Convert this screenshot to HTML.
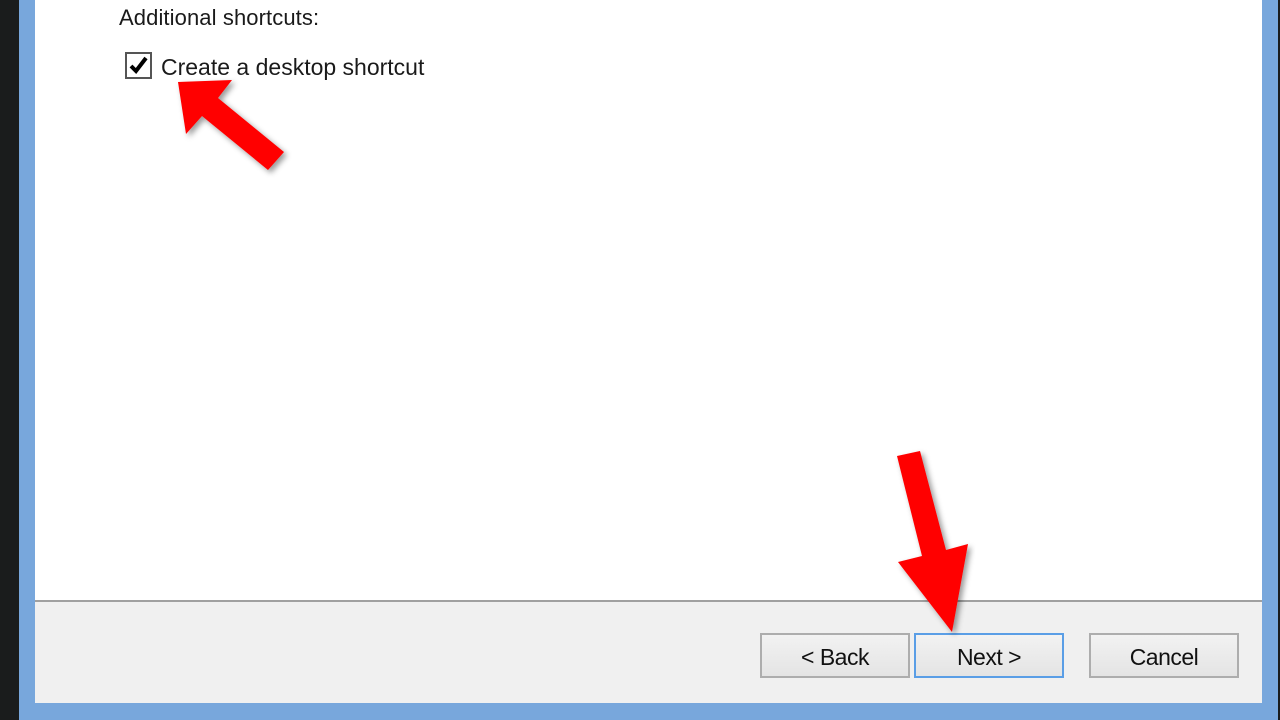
<!DOCTYPE html>
<html><head><style>
body{margin:0;width:1280px;height:720px;overflow:hidden;background:#1a1c1c;position:relative;font-family:"Liberation Sans",sans-serif;}
.frame{position:absolute;left:19px;top:-10px;width:1259px;height:730px;background:#78a7dc;}
.white{position:absolute;left:35px;top:0;width:1227px;height:600px;background:#fff;}
.gray{position:absolute;left:35px;top:600px;width:1227px;height:103px;background:#f0f0f0;border-top:2px solid #a0a0a0;box-sizing:border-box;}
.t{position:absolute;font-size:22px;color:#1a1a1a;}
.btn{position:absolute;top:633px;width:150px;height:45px;box-sizing:border-box;border:2px solid #adadad;background:linear-gradient(#f2f2f2,#e4e4e4);font-size:23px;color:#111;text-align:center;line-height:45px;letter-spacing:-0.5px;}
.cb{position:absolute;left:125px;top:52px;width:27px;height:27px;box-sizing:border-box;border:2px solid #555;background:#fff;}
</style></head><body>
<div class="frame"></div>
<div class="white"></div>
<div class="gray"></div>
<div class="t" style="left:119px;top:5px;letter-spacing:0.1px">Additional shortcuts:</div>
<div class="cb"><svg width="23" height="23" viewBox="0 0 23 23"><path d="M4 12 L9 17 L19 4" stroke="#000" stroke-width="4" fill="none"/></svg></div>
<div class="t" style="left:161px;top:54px;font-size:23px">Create a desktop shortcut</div>
<div class="btn" style="left:760px">&lt; Back</div>
<div class="btn" style="left:914px;border-color:#5a9ee6">Next &gt;</div>
<div class="btn" style="left:1089px">Cancel</div>
<svg style="position:absolute;left:0;top:0" width="1280" height="720">
<defs><filter id="s"><feDropShadow dx="3" dy="3" stdDeviation="3" flood-color="#000" flood-opacity="0.4"/></filter></defs>
<polygon filter="url(#s)" fill="#f00" points="178,82 232,80 218,98 284,152 268,170 202,116 186,134"/>
<polygon filter="url(#s)" fill="#f00" points="897,456 920,451 946,550 968,544 952,632 898,562 922,556"/>
</svg>
</body></html>
